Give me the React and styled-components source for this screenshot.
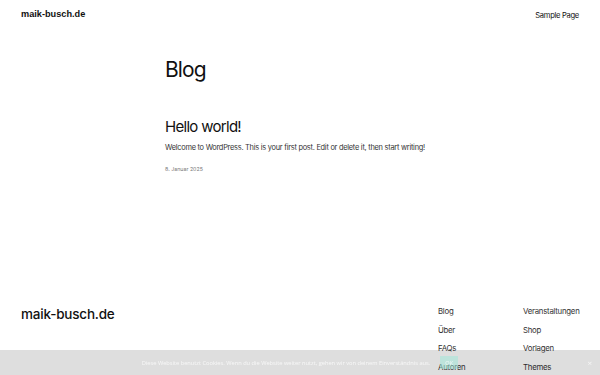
import React from 'react';
import styled, { createGlobalStyle } from 'styled-components';

const GlobalStyle = createGlobalStyle`
  html, body {
    margin: 0;
    padding: 0;
    background: #ffffff;
    color: #111111;
    font-family: Inter, "Liberation Sans", sans-serif;
  }
`;

const Page = styled.div`
  display: flex;
  flex-direction: column;
  min-height: 100vh;
`;

const Header = styled.header`
  display: flex;
  align-items: center;
  justify-content: space-between;
  padding: 8px 21px 0;
  height: 14px;
`;

const Logo = styled.a`
  font-family: ${(p) => (p.small ? '"Liberation Sans", Arial, sans-serif' : 'Inter, sans-serif')};
  font-size: ${(p) => p.size}px;
  font-weight: ${(p) => p.weight};
  color: #111;
  text-decoration: none;
  letter-spacing: ${(p) => (p.small ? '0' : '-0.2px')};
  line-height: 1;
`;

const NavLink = styled.a`
  font-size: 7.6px;
  letter-spacing: -0.3px;
  color: #111;
  text-decoration: none;
`;

const Main = styled.main`
  width: 270px;
  margin: 0 auto;
  padding-top: 35px;
  height: 281px;
  box-sizing: border-box;
`;

const Title = styled.h1`
  margin: 0 0 36px;
  font-size: 21px;
  font-weight: 400;
  line-height: 1.2;
  letter-spacing: -0.9px;
`;

const PostTitle = styled.h2`
  margin: 0 0 7px;
  font-size: 15px;
  font-weight: 400;
  line-height: 1.2;
  letter-spacing: -0.7px;
`;

const Excerpt = styled.p`
  margin: 0 0 12px;
  font-size: 7.4px;
  line-height: 1.4;
  letter-spacing: -0.25px;
  color: #333;
  white-space: nowrap;
`;

const PostDate = styled.div`
  font-size: 5.3px;
  color: #777;
`;

const Footer = styled.footer`
  display: flex;
  justify-content: space-between;
  padding: 0 21px;
`;

const FooterBrand = styled.div`
  padding-top: 0;
`;

const LinkColumns = styled.div`
  display: flex;
  padding-top: 3px;
`;

const LinkColumn = styled.ul`
  list-style: none;
  margin: 0;
  padding: 0;
  width: ${(p) => p.width}px;
  display: flex;
  flex-direction: column;
  gap: 8.7px;
`;

const FooterLink = styled.li`
  font-size: 7.8px;
  line-height: 10px;
  letter-spacing: -0.25px;
  color: #333;
`;

const CookieBar = styled.div`
  position: fixed;
  left: 0;
  right: 0;
  bottom: 0;
  height: 25px;
  background: rgba(0, 0, 0, 0.13);
  display: flex;
  align-items: center;
  justify-content: center;
  gap: 10px;
  font-family: "Open Sans", sans-serif;
`;

const CookieText = styled.span`
  font-size: 5.7px;
  color: rgba(255, 255, 255, 0.75);
`;

const OkButton = styled.button`
  border: none;
  background: rgba(160, 230, 215, 0.55);
  color: rgba(255, 255, 255, 0.8);
  font-size: 5.6px;
  width: 18px;
  height: 13px;
  padding: 0;
  font-family: inherit;
`;

const Close = styled.span`
  position: absolute;
  right: 8px;
  top: 7px;
  font-size: 8px;
  color: rgba(255, 255, 255, 0.7);
`;

export default function App() {
  return (
    <>
      <GlobalStyle />
      <Page>
        <Header>
          <Logo small size={9.2} weight={700}>maik-busch.de</Logo>
          <NavLink>Sample Page</NavLink>
        </Header>
        <Main>
          <Title>Blog</Title>
          <PostTitle>Hello world!</PostTitle>
          <Excerpt>
            Welcome to WordPress. This is your first post. Edit or delete it, then start writing!
          </Excerpt>
          <PostDate>8. Januar 2025</PostDate>
        </Main>
        <Footer>
          <FooterBrand>
            <Logo size={13.5} weight={500}>maik-busch.de</Logo>
          </FooterBrand>
          <LinkColumns>
            <LinkColumn width={85}>
              <FooterLink>Blog</FooterLink>
              <FooterLink>Über</FooterLink>
              <FooterLink>FAQs</FooterLink>
              <FooterLink>Autoren</FooterLink>
            </LinkColumn>
            <LinkColumn width={56}>
              <FooterLink>Veranstaltungen</FooterLink>
              <FooterLink>Shop</FooterLink>
              <FooterLink>Vorlagen</FooterLink>
              <FooterLink>Themes</FooterLink>
            </LinkColumn>
          </LinkColumns>
        </Footer>
      </Page>
      <CookieBar>
        <CookieText>
          Diese Website benutzt Cookies. Wenn du die Website weiter nutzt, gehen wir von deinem Einverständnis aus.
        </CookieText>
        <OkButton>OK</OkButton>
        <Close>×</Close>
      </CookieBar>
    </>
  );
}
